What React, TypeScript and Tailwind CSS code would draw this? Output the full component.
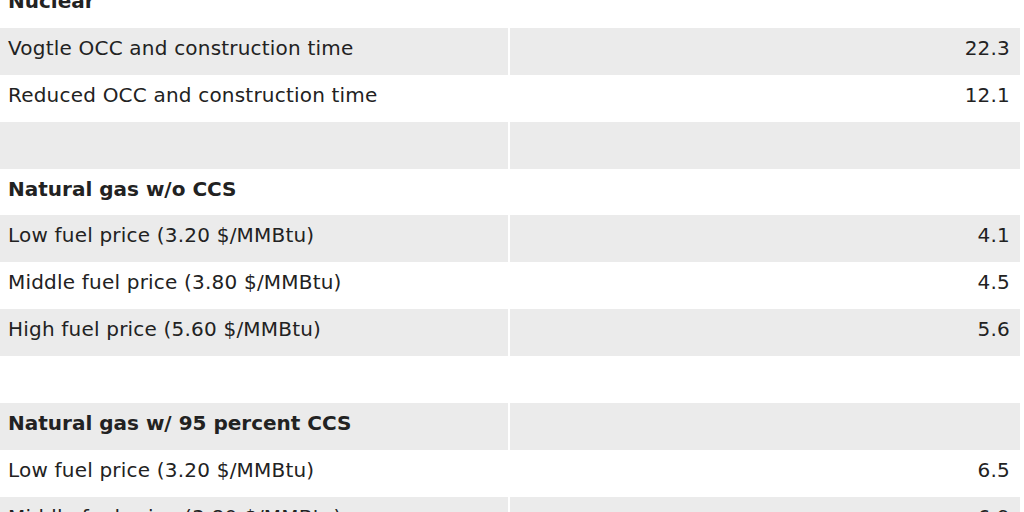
const rows: { label: string; value: string; bold?: boolean }[] = [
  { label: "Nuclear", value: "", bold: true },
  { label: "Vogtle OCC and construction time", value: "22.3" },
  { label: "Reduced OCC and construction time", value: "12.1" },
  { label: "", value: "" },
  { label: "Natural gas w/o CCS", value: "", bold: true },
  { label: "Low fuel price (3.20 $/MMBtu)", value: "4.1" },
  { label: "Middle fuel price (3.80 $/MMBtu)", value: "4.5" },
  { label: "High fuel price (5.60 $/MMBtu)", value: "5.6" },
  { label: "", value: "" },
  { label: "Natural gas w/ 95 percent CCS", value: "", bold: true },
  { label: "Low fuel price (3.20 $/MMBtu)", value: "6.5" },
  { label: "Middle fuel price (3.80 $/MMBtu)", value: "6.9" },
];

export default function App() {
  return (
    <div className="w-[1024px] h-[512px] overflow-hidden bg-white font-['DejaVu_Sans',sans-serif] text-[#222]">
      <div className="w-[1020px] -mt-[19px]">
        {rows.map((row, i) => {
          const shaded = i % 2 === 1;
          return (
            <div key={i} className="flex h-[46.9px] gap-[2px]">
              <div
                className={`w-[508px] flex items-center pl-2 pb-[7px] text-[20px] whitespace-nowrap ${
                  shaded ? "bg-[#ebebeb]" : "bg-white"
                } ${row.bold ? "font-bold" : "tracking-[0.2px]"}`}
              >
                {row.label}
              </div>
              <div
                className={`flex-1 flex items-center justify-end pr-[10px] pb-[7px] text-[20px] tracking-[0.2px] ${
                  shaded ? "bg-[#ebebeb]" : "bg-white"
                }`}
              >
                {row.value}
              </div>
            </div>
          );
        })}
      </div>
    </div>
  );
}
